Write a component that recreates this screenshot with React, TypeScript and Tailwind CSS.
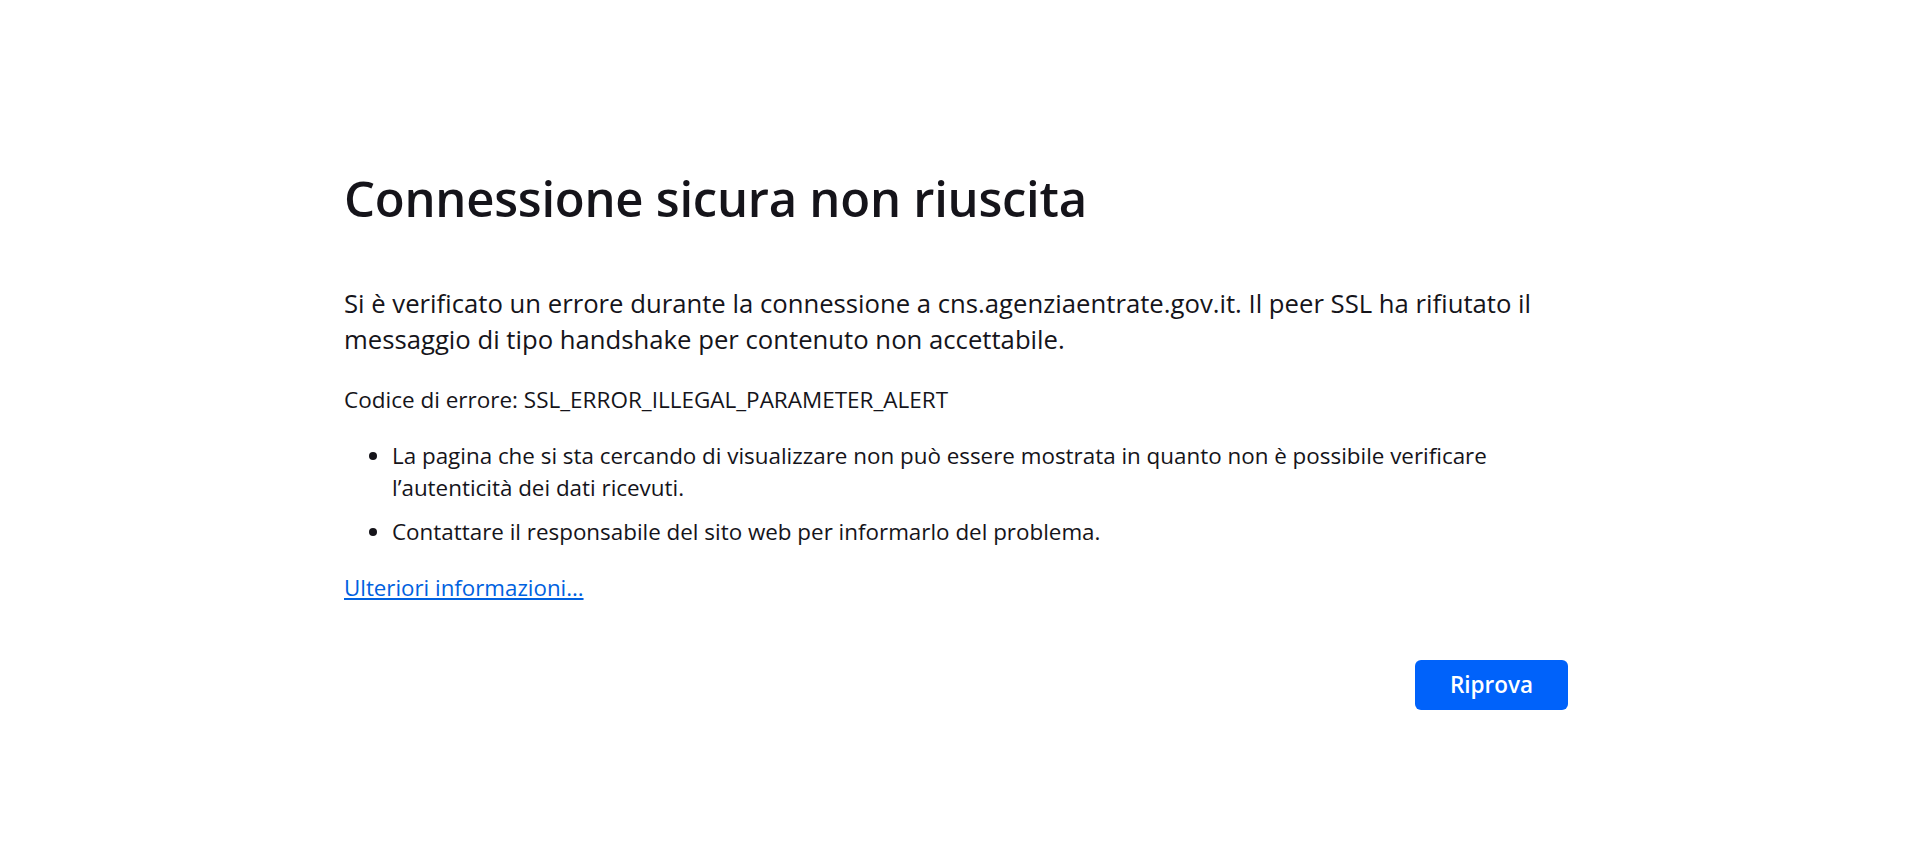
export default function App() {
  return (
    <div className="min-h-[841px] bg-white text-[#15141a]" style={{ fontFamily: '"Open Sans", "Noto Sans", sans-serif' }}>
      <div className="ml-[344px] w-[1224px] pt-[166px]">
        <h1 className="text-[49px] leading-[64px] font-semibold tracking-[-0.25px]">Connessione sicura non riuscita</h1>

        <p className="mt-[56px] text-[25.7px] leading-[36px]">
          Si è verificato un errore durante la connessione a cns.agenziaentrate.gov.it. Il peer SSL ha rifiutato il messaggio di tipo handshake per contenuto non accettabile.
        </p>

        <p className="mt-[26px] text-[22.5px] leading-[32px]">Codice di errore: SSL_ERROR_ILLEGAL_PARAMETER_ALERT</p>

        <ul className="mt-[24px] pl-[48px] pr-[60px] text-[22.4px] leading-[32px] list-disc">
          <li>La pagina che si sta cercando di visualizzare non può essere mostrata in quanto non è possibile verificare l’autenticità dei dati ricevuti.</li>
          <li className="mt-[12px]">Contattare il responsabile del sito web per informarlo del problema.</li>
        </ul>

        <p className="mt-[24px] text-[22.3px] leading-[32px]">
          <a href="#" className="text-[#0061e0] underline">Ulteriori informazioni…</a>
        </p>

        <div className="mt-[56px] flex justify-end">
          <button className="h-[50px] w-[153px] rounded-[6px] bg-[#0062fa] text-[22.5px] font-semibold text-white">Riprova</button>
        </div>
      </div>
    </div>
  );
}
